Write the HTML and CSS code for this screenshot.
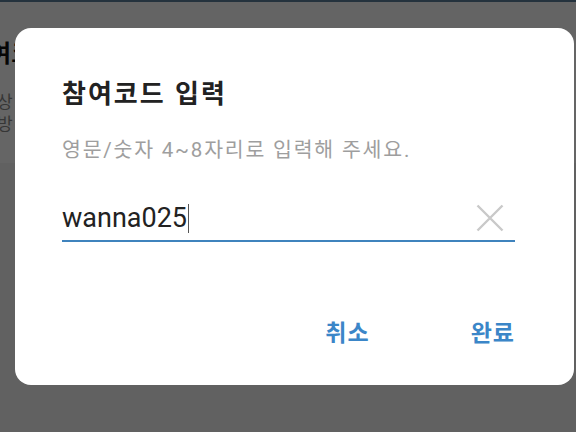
FILE: index.html
```html
<!DOCTYPE html>
<html lang="ko">
<head>
<meta charset="utf-8">
<link rel="stylesheet" href="styles.css">
</head>
<body>
<div class="page">
  <div class="statusbar"></div>
  <div class="header"></div>
  <div class="card">
    <div class="card-title">참여코드</div>
    <div class="card-desc">상<br>방</div>
  </div>
  <div class="rest"></div>
</div>
<div class="overlay">
  <div class="dialog">
    <div class="title">참여코드 입력</div>
    <div class="desc">영문/숫자 4~8자리로 입력해 주세요.</div>
    <div class="field">
      <div class="value">wanna025<span class="caret"></span></div>
      <svg class="clear" width="28" height="28" viewBox="0 0 28 28"><path d="M1.5 1.5 L26.5 26.5 M26.5 1.5 L1.5 26.5" stroke="#c9c9c9" stroke-width="2.4" fill="none"/></svg>
    </div>
    <div class="actions">
      <span class="btn">취소</span>
      <span class="btn">완료</span>
    </div>
  </div>
</div>
</body>
</html>
```
FILE: styles.css
```css
html, body {
  margin: 0;
  padding: 0;
  width: 576px;
  height: 432px;
  overflow: hidden;
  font-family: Roboto, "Noto Sans CJK KR", sans-serif;
}
.page {
  height: 432px;
  display: flex;
  flex-direction: column;
  background: #f2f2f2;
}
.statusbar {
  height: 2px;
  background: #5a7d99;
}
.header {
  height: 28px;
  background: #fafafa;
}
.card {
  height: 133px;
  background: #fcfcfc;
  overflow: hidden;
}
.card-title {
  font-family: "Noto Sans CJK KR", sans-serif;
  font-weight: 700;
  font-size: 24px;
  line-height: 32px;
  color: #111;
  margin-top: 6px;
  margin-left: -33px;
  white-space: nowrap;
}
.card-desc {
  font-family: "Noto Sans CJK KR", sans-serif;
  font-size: 17px;
  line-height: 22px;
  color: #888;
  margin-top: 22px;
  margin-left: -3px;
}
.rest {
  flex: 1;
}
.overlay {
  position: absolute;
  inset: 0;
  background: rgba(0, 0, 0, 0.6);
}
.dialog {
  position: absolute;
  left: 15px;
  top: 28px;
  width: 559px;
  height: 357px;
  box-sizing: border-box;
  background: #fff;
  border-radius: 16px;
  padding: 48px 59px 0 47px;
  display: flex;
  flex-direction: column;
}
.title {
  font-family: "Noto Sans CJK KR", sans-serif;
  font-weight: 700;
  font-size: 26px;
  line-height: 32px;
  letter-spacing: 2px;
  color: #222;
}
.desc {
  font-family: Roboto, "Noto Sans CJK KR", sans-serif;
  font-size: 20.5px;
  line-height: 28px;
  letter-spacing: 1.8px;
  color: #9e9e9e;
  margin-top: 28px;
}
.field {
  margin-top: 32px;
  height: 44px;
  border-bottom: 2px solid #3f83bd;
  display: flex;
  align-items: center;
  justify-content: space-between;
}
.value {
  font-family: Roboto, sans-serif;
  font-size: 27px;
  line-height: 30px;
  color: #222;
  display: flex;
  align-items: center;
}
.caret {
  display: inline-block;
  width: 1px;
  height: 29px;
  background: #555;
  margin-left: 1px;
}
.clear {
  margin-right: 11px;
}
.actions {
  margin-top: 74px;
  display: flex;
  justify-content: flex-end;
  gap: 101px;
}
.btn {
  font-family: "Noto Sans CJK KR", sans-serif;
  font-weight: 700;
  font-size: 23px;
  line-height: 30px;
  letter-spacing: 1px;
  color: #3b86c8;
}
```
